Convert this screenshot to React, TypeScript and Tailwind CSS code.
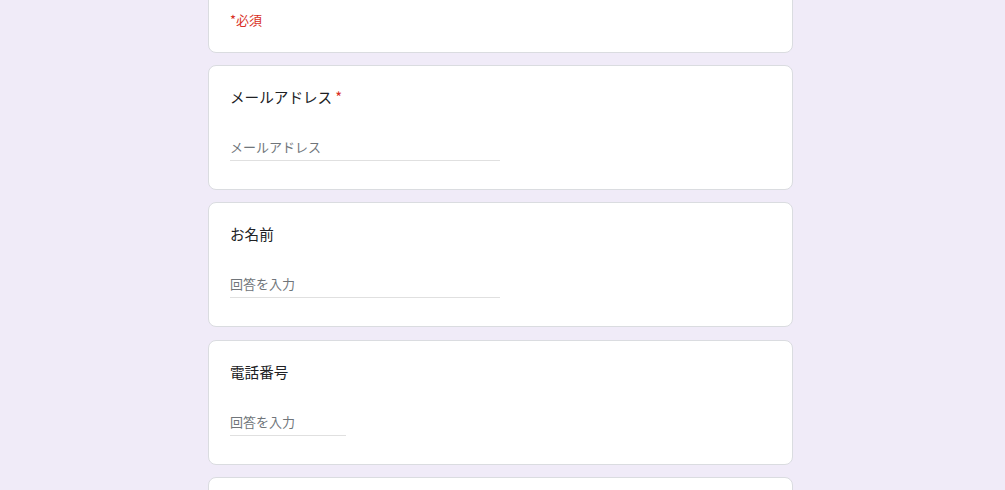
const font = { fontFamily: '"Noto Sans CJK JP", "Noto Sans", sans-serif' };

function Question({ title, required, placeholder, lineWidth, className = "" }: { title: string; required?: boolean; placeholder: string; lineWidth: string; className?: string }) {
  return (
    <div className={`h-[125px] rounded-[8px] border border-[#dadce0] bg-white px-[21px] pt-[21px] ${className}`}>
      <div className="text-[14.6px] leading-[20px] text-[#202124]">
        {title}
        {required && <span className="ml-[3px] text-[#d93025]">*</span>}
      </div>
      <div className={`mt-[31px] ${lineWidth} border-b border-[#e0e0e0] pb-[4px] text-[13px] leading-[18px] text-[#70757a]`}>
        {placeholder}
      </div>
    </div>
  );
}

export default function App() {
  return (
    <div className="h-[490px] w-full overflow-hidden bg-[#f0ebf8]" style={font}>
      <div className="ml-[208px] flex w-[585px] flex-col gap-[12px] -mt-[10px]">
        <div className="h-[63px] rounded-[8px] border border-[#dadce0] bg-white px-[21px] pt-[19px]">
          <div className="text-[13px] leading-[20px] text-[#d93025]">*必須</div>
        </div>
        <Question title="メールアドレス" required placeholder="メールアドレス" lineWidth="w-[270px]" />
        <Question title="お名前" placeholder="回答を入力" lineWidth="w-[270px]" />
        <Question title="電話番号" placeholder="回答を入力" lineWidth="w-[116px]" className="mt-[1px]" />
        <Question title="" placeholder="" lineWidth="w-[116px]" />
      </div>
    </div>
  );
}
